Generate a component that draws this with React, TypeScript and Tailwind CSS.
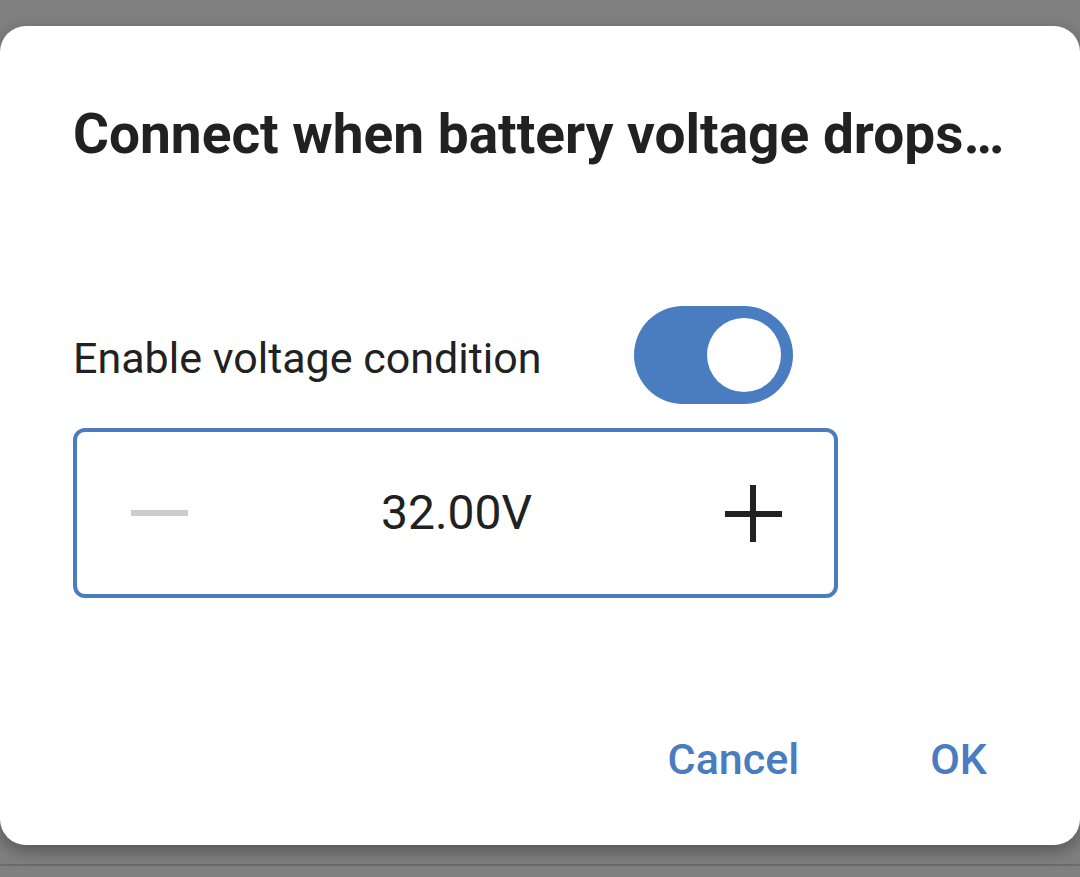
import React from "react";

export default function App() {
  return (
    <div
      className="w-[1080px] h-[877px] bg-[#808080] overflow-hidden pt-[26px]"
      style={{ fontFamily: "Roboto, 'Noto Sans', sans-serif" }}
    >
      <div className="relative z-10 w-[1080px] h-[819px] bg-white rounded-[26px] pt-[75px] pl-[73px] shadow-[0_6px_18px_rgba(0,0,0,0.35)]">
        <h1 className="text-[55px] font-bold leading-[66px] text-[#212121] whitespace-nowrap">
          Connect when battery voltage drops…
        </h1>

        <div className="mt-[139px] flex items-center h-[98px]">
          <span className="w-[561px] pt-[6px] text-[43px] leading-[50px] text-[#212121] whitespace-nowrap">
            Enable voltage condition
          </span>
          <div className="w-[159px] h-[98px] rounded-full bg-[#4a7dbf] flex items-center justify-end pr-[12px]">
            <div className="w-[74px] h-[74px] rounded-full bg-white" />
          </div>
        </div>

        <div className="mt-[24px] w-[765px] h-[170px] border-4 border-[#4a7dbf] rounded-[12px] flex items-center justify-between pl-[54px] pr-[52px]">
          <div className="w-[57px] h-[6px] bg-[#cccccc]" />
          <span className="text-[48px] leading-[56px] text-[#212121]">32.00V</span>
          <svg width="57" height="57" viewBox="0 0 57 57">
            <rect x="0" y="26" width="57" height="6" fill="#222222" />
            <rect x="25" y="0" width="6" height="57" fill="#222222" />
          </svg>
        </div>

        <div className="mt-[136px] flex justify-end items-center gap-[131px] pr-[93px]">
          <button className="text-[43px] leading-[50px] font-medium text-[#4a7dbf]">Cancel</button>
          <button className="text-[43px] leading-[50px] font-medium text-[#4a7dbf]">OK</button>
        </div>
      </div>
      <div className="mt-[19px] h-[2px] bg-[#6c6c6c]" />
    </div>
  );
}
